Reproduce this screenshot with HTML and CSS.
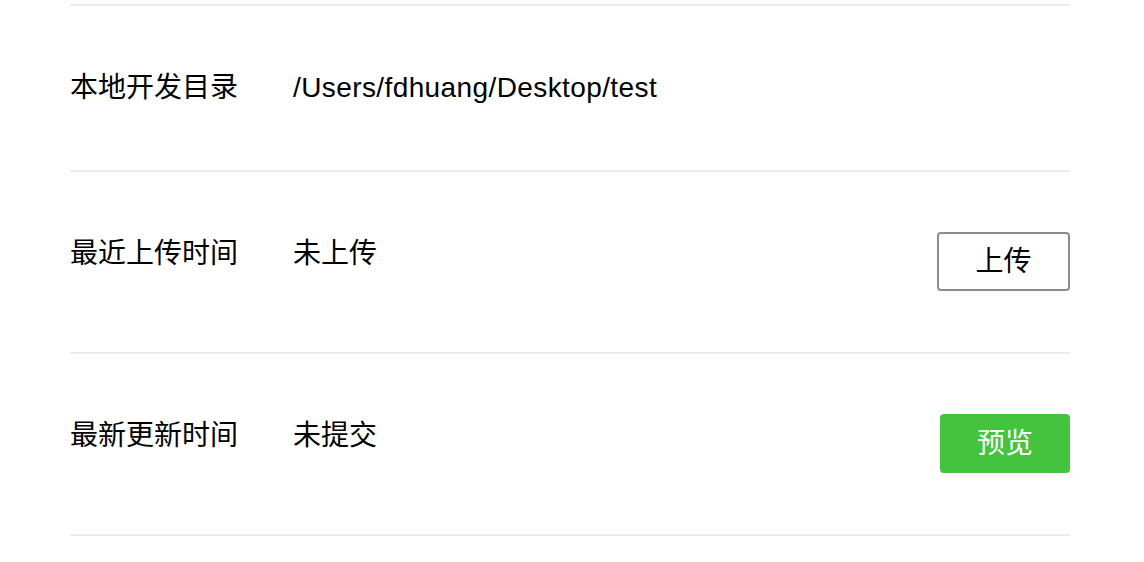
FILE: index.html
```html
<!DOCTYPE html>
<html lang="zh-CN">
<head>
<meta charset="utf-8">
<title>项目信息</title>
<link rel="stylesheet" href="styles.css">
</head>
<body>
  <div class="page">
    <ul class="info-list">
      <li class="info-row">
        <span class="label">本地开发目录</span>
        <span class="value value-path">/Users/fdhuang/Desktop/test</span>
      </li>
      <li class="info-row">
        <span class="label">最近上传时间</span>
        <span class="value">未上传</span>
        <button class="btn btn-default btn-upload">上传</button>
      </li>
      <li class="info-row">
        <span class="label">最新更新时间</span>
        <span class="value">未提交</span>
        <button class="btn btn-primary">预览</button>
      </li>
    </ul>
  </div>
</body>
</html>
```

FILE: styles.css
```css
html, body {
  margin: 0;
  padding: 0;
  background: #ffffff;
}

body {
  font-family: "Liberation Sans", "Noto Sans CJK SC", sans-serif;
  color: #000000;
}

.page {
  padding: 4px 0 0 70px;
  width: 1000px;
}

.info-list {
  list-style: none;
  margin: 0;
  padding: 0;
  border-bottom: 2px solid #ececec;
}

.info-row {
  display: grid;
  grid-template-columns: 223px 1fr auto;
  align-items: start;
  border-top: 2px solid #ececec;
  padding: 61px 0 61px;
}

.info-row:nth-child(2) {
  padding-top: 60px;
  padding-bottom: 61px;
}

.info-row:nth-child(3) {
  padding-top: 60px;
  padding-bottom: 61px;
}

.info-row:nth-child(2) .label,
.info-row:nth-child(2) .value,
.info-row:nth-child(3) .label,
.info-row:nth-child(3) .value {
  margin-top: 1px;
}

.label,
.value {
  font-size: 28px;
  line-height: 42px;
  white-space: nowrap;
}

.value-path {
  letter-spacing: 0.4px;
}

.btn {
  font-family: "Liberation Sans", "Noto Sans CJK SC", sans-serif;
  font-size: 28px;
  height: 59px;
  border-radius: 4px;
  padding: 0;
  cursor: pointer;
  line-height: 1;
}

.btn-default {
  width: 133px;
  background: #ffffff;
  border: 2px solid #8c8c8c;
  color: #000000;
}

.btn-primary {
  width: 130px;
  background: #44c33f;
  border: none;
  color: #ffffff;
}
```
